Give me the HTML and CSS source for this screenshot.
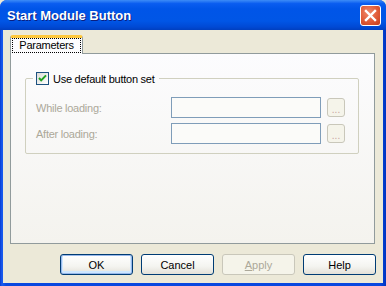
FILE: index.html
```html
<!DOCTYPE html>
<html lang="en">

<head>
    <meta charset="UTF-8">
    <title>Start Module Button</title>
    <link rel="stylesheet" href="styles.css">
</head>

<body>
    <div class="window">
        <div class="titlebar">
            <span class="title">Start Module Button</span>
            <button class="close" type="button" aria-label="Close">
                <svg width="13" height="13" viewBox="0 0 13 13">
                    <path d="M2 2 L11 11 M11 2 L2 11" stroke="#fff" stroke-width="2.4" stroke-linecap="square" />
                </svg>
            </button>
        </div>
        <div class="client">
            <div class="tabs">
                <div class="tab active"><span class="focus">Parameters</span></div>
            </div>
            <div class="panel">
                <fieldset class="group">
                    <legend>
                        <label class="check">
                            <span class="box">
                                <svg width="11" height="11" viewBox="0 0 11 11">
                                    <path d="M2 5 L4.2 7.4 L9 2.4" fill="none" stroke="#21a121" stroke-width="2" />
                                </svg>
                            </span>
                            Use default button set
                        </label>
                    </legend>
                    <div class="row">
                        <span class="label">While loading:</span>
                        <input class="field" type="text" disabled>
                        <button class="browse" type="button" disabled>...</button>
                    </div>
                    <div class="row">
                        <span class="label">After loading:</span>
                        <input class="field" type="text" disabled>
                        <button class="browse" type="button" disabled>...</button>
                    </div>
                </fieldset>
            </div>
            <div class="actions">
                <button class="btn default" type="button">OK</button>
                <button class="btn" type="button">Cancel</button>
                <button class="btn" type="button" disabled><u>A</u>pply</button>
                <button class="btn" type="button">Help</button>
            </div>
        </div>
    </div>
</body>

</html>
```

FILE: styles.css
```css
body {
    margin: 0;
    padding: 0;
    background-color: #ece9d8;
    font-family: "Liberation Sans", Arial, sans-serif;
    font-size: 11px;
    letter-spacing: -0.25px;
}

.window {
    width: 386px;
    height: 286px;
    display: flex;
    flex-direction: column;
    box-sizing: border-box;
    background: linear-gradient(to right, #0a3cd0, #1a5cf0 2px, #0848e0 6px, #0848e0 380px, #0033c0);
    border-radius: 7px 7px 0 0;
}

/* title bar, Luna blue */
.titlebar {
    height: 30px;
    display: flex;
    align-items: center;
    justify-content: space-between;
    padding: 0 5px 0 7px;
    border-radius: 7px 7px 0 0;
    background: linear-gradient(to bottom, #3d8cf7 0%, #0a5df0 12%, #0055e8 30%, #0056e6 70%, #0049d4 90%, #003fbf 100%);
}

.title {
    color: #fff;
    font-weight: bold;
    font-size: 13px;
    letter-spacing: 0;
    text-shadow: 1px 1px 0 #0a1e80;
    margin-top: 1px;
}

.close {
    width: 21px;
    height: 21px;
    padding: 0;
    display: flex;
    align-items: center;
    justify-content: center;
    border: 1px solid #fff;
    border-radius: 3px;
    background: radial-gradient(circle at 40% 35%, #f08a6c, #e05a36 55%, #c43c1a);
}

.client {
    flex: 1;
    margin: 0 3px 3px 3px;
    background-color: #ece9d8;
    padding: 5px 8px 0 7px;
    display: flex;
    flex-direction: column;
}

.tabs {
    display: flex;
    height: 18px;
    position: relative;
    z-index: 1;
}

.tab {
    width: 73px;
    box-sizing: border-box;
    border: 1px solid #919b9c;
    border-top: 3px solid #ffc83c;
    border-bottom: none;
    border-radius: 3px 3px 0 0;
    background-color: #fcfcfe;
    padding: 0 1px;
    height: 19px;
}

.tab .focus {
    display: block;
    border: 1px dotted #000;
    text-align: center;
    line-height: 13px;
    color: #000;
}

.panel {
    height: 191px;
    box-sizing: border-box;
    border: 1px solid #919b9c;
    background: linear-gradient(to bottom, #fcfcfe, #f4f3ee);
    padding: 18px 15px 0 14px;
}

.group {
    margin: 0;
    border: 1px solid #d0d0bf;
    border-radius: 2px;
    padding: 12px 13px 9px 10px;
}

.group legend {
    padding: 0 4px 0 3px;
    margin-left: -3px;
}

.check {
    display: flex;
    align-items: center;
    gap: 4px;
    color: #000;
}

.box {
    width: 13px;
    height: 13px;
    box-sizing: border-box;
    border: 1px solid #1c5180;
    background: linear-gradient(135deg, #dcdcd7, #fff);
    display: flex;
    align-items: center;
    justify-content: center;
}

.row {
    display: flex;
    align-items: center;
    margin-top: 5px;
}

.row:first-of-type {
    margin-top: 0;
}

.label {
    width: 135px;
    color: #aca899;
}

.field {
    width: 150px;
    height: 21px;
    box-sizing: border-box;
    margin: 0;
    border: 1px solid #7f9db9;
    background-color: #fbfbf9;
}

.browse {
    width: 18px;
    height: 19px;
    margin-left: 6px;
    padding: 4px 0 0 0;
    border: 1px solid #c9c7ba;
    border-radius: 3px;
    background-color: #f5f4ea;
    color: #c9a3a3;
    font-family: "Liberation Sans", Arial, sans-serif;
    font-size: 10px;
    letter-spacing: 0;
    line-height: 10px;
}

.actions {
    display: flex;
    justify-content: flex-end;
    gap: 8px;
    padding-top: 10px;
    margin-right: -1px;
}

.btn {
    width: 73px;
    height: 21px;
    padding: 0;
    border: 1px solid #003c74;
    border-radius: 3px;
    background: linear-gradient(to bottom, #fff, #f4f4f0 60%, #e3e1d8);
    color: #000;
    font-family: "Liberation Sans", Arial, sans-serif;
    font-size: 11px;
}

.btn.default {
    box-shadow: inset 0 0 0 1px #98b8ea, inset 0 -1px 0 2px #cee7ff;
}

.btn:disabled {
    border-color: #c9c7ba;
    background: #f5f4ea;
    color: #aca899;
}
```
